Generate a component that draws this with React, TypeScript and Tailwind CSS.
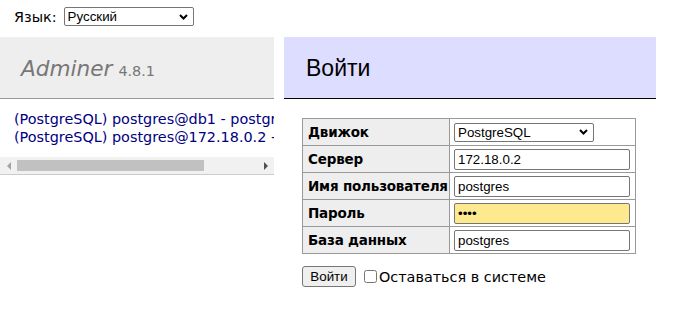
import React from 'react';

const verdana = "font-['DejaVu_Sans',Verdana,sans-serif]";
const arial = "font-['Liberation_Sans',Arial,sans-serif]";

const Chevron = () => (
  <svg
    className="pointer-events-none absolute right-[6px] top-1/2 -translate-y-1/2"
    width="9"
    height="6"
    viewBox="0 0 9 6"
  >
    <path d="M1 1l3.5 3.5L8 1" fill="none" stroke="#000" strokeWidth="2" />
  </svg>
);

const FakeSelect = ({ value, className }: { value: string; className: string }) => (
  <div className={`relative ${className}`}>
    <select
      defaultValue={value}
      className={`h-full w-full appearance-none rounded-[2px] border border-[#767676] bg-white pl-[3px] text-[13.33px] text-black ${arial}`}
    >
      <option>{value}</option>
    </select>
    <Chevron />
  </div>
);

const rows: { label: string; kind: 'select' | 'text' | 'password'; value: string }[] = [
  { label: 'Движок', kind: 'select', value: 'PostgreSQL' },
  { label: 'Сервер', kind: 'text', value: '172.18.0.2' },
  { label: 'Имя пользователя', kind: 'text', value: 'postgres' },
  { label: 'Пароль', kind: 'password', value: 'pass' },
  { label: 'База данных', kind: 'text', value: 'postgres' },
];

export default function App() {
  return (
    <div className={`h-[315px] w-[681px] overflow-hidden bg-white text-[14.4px] leading-[18px] text-black ${verdana}`}>
      {/* language */}
      <div className="flex h-[37px] items-start px-[14px] pt-[7px]">
        <span className="mr-[7px] mt-[1px]">Язык:</span>
        <FakeSelect value="Русский" className="h-[19px] w-[130px]" />
      </div>

      <div className="flex items-start">
        {/* sidebar */}
        <div className="w-[274px] shrink-0">
          <h1 className="flex h-[62px] items-center border-b border-[#999] bg-[#eee] px-[21px] pt-[2px] font-normal text-[#777]">
            <span className="text-[21.6px] italic">Adminer</span>
            <span className="ml-[6px] mt-[5px] text-[14.4px]">4.8.1</span>
          </h1>
          <div className="border-b border-[#ccc]">
            <div className="overflow-hidden whitespace-nowrap px-[14px] pb-[11px] pt-[11px] text-[#000080]">
              <div>(PostgreSQL) postgres@db1 - postgres</div>
              <div>(PostgreSQL) postgres@172.18.0.2 - postgres</div>
            </div>
            {/* horizontal scrollbar */}
            <div className="flex h-[17px] items-center bg-[#f1f1f1]">
              <div className="flex w-[17px] justify-center">
                <div className="h-0 w-0 border-y-[4px] border-r-[4px] border-y-transparent border-r-[#a3a3a3]" />
              </div>
              <div className="h-[11px] w-[187px] bg-[#c1c1c1]" />
              <div className="flex-1" />
              <div className="flex w-[17px] justify-center">
                <div className="h-0 w-0 border-y-[4px] border-l-[4px] border-y-transparent border-l-[#505050]" />
              </div>
            </div>
          </div>
        </div>

        {/* content */}
        <div className="ml-[10px] w-[372px]">
          <h2 className={`flex h-[62px] items-center border-b border-black bg-[#ddf] px-[22px] text-[23px] font-normal ${arial}`}>
            Войти
          </h2>

          <table className="ml-[18px] mt-[19px] w-[334px] table-fixed border-collapse border border-[#999]">
            <colgroup>
              <col className="w-[147px]" />
              <col />
            </colgroup>
            <tbody>
              {rows.map((r) => (
                <tr key={r.label} className="h-[27px]">
                  <th className="overflow-hidden whitespace-nowrap border border-[#999] bg-[#eee] px-[5px] text-left align-middle text-[13.5px] font-bold tracking-[-0.2px]">
                    {r.label}
                  </th>
                  <td className="border border-[#999] px-[4px] align-middle">
                    {r.kind === 'select' ? (
                      <FakeSelect value={r.value} className="h-[19px] w-[140px]" />
                    ) : (
                      <input
                        type={r.kind}
                        defaultValue={r.value}
                        className={`block h-[21px] w-[176px] rounded-[2px] border border-[#767676] px-[3px] text-[13.33px] text-black ${arial} ${
                          r.kind === 'password' ? 'bg-[#fee98f]' : 'bg-white'
                        }`}
                      />
                    )}
                  </td>
                </tr>
              ))}
            </tbody>
          </table>

          <div className="ml-[18px] mt-[12px] flex items-center">
            <button
              className={`h-[21px] w-[54px] rounded-[3px] border border-[#767676] bg-[#efefef] text-[13.33px] text-black ${arial}`}
            >
              Войти
            </button>
            <label className="ml-[8px] flex items-center">
              <input type="checkbox" className="mr-[2px] h-[13px] w-[13px]" />
              <span>Оставаться в системе</span>
            </label>
          </div>
        </div>
      </div>
    </div>
  );
}
